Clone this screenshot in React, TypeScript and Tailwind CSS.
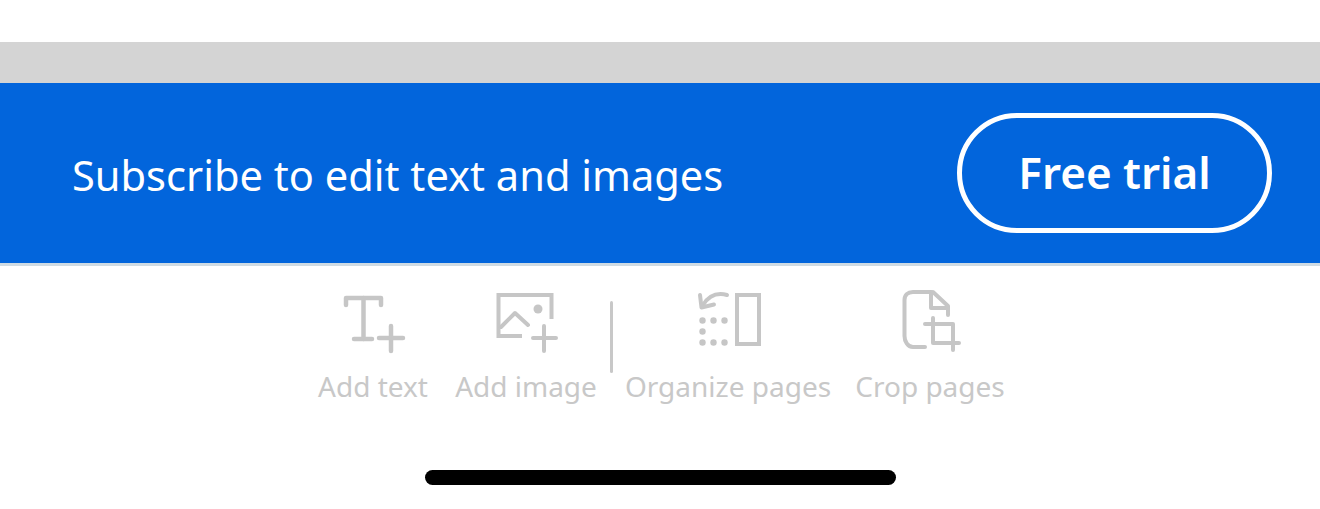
const strokeProps = {
  fill: 'none',
  stroke: '#c6c6c6',
  strokeWidth: 4,
  strokeLinecap: 'round' as const,
  strokeLinejoin: 'round' as const,
};

function AddTextIcon() {
  return (
    <svg width="112" height="68" viewBox="317 288 112 68" {...strokeProps} strokeWidth={4.5}>
      <path d="M346 305V298H381V305" />
      <path d="M363.5 298V339" />
      <path d="M354 339H372" />
      <path d="M379 338H403M391 326V351" />
    </svg>
  );
}

function AddImageIcon() {
  return (
    <svg width="142" height="68" viewBox="455 288 142 68" {...strokeProps}>
      <path d="M551.5 319V295H498.5V336H522" strokeLinecap="butt" strokeLinejoin="miter" />
      <path d="M501 327L515 313L528 325" />
      <circle cx="538" cy="309" r="4.5" fill="#c6c6c6" stroke="none" />
      <path d="M533 338H556M544 326V351" />
    </svg>
  );
}

function OrganizeIcon() {
  const dots = [
    [702.5, 320.5], [713.5, 320.5], [724.5, 320.5],
    [702.5, 331.5],
    [702.5, 342.5], [713.5, 342.5], [724.5, 342.5],
  ];
  return (
    <svg width="204" height="68" viewBox="626 288 204 68" {...strokeProps}>
      <rect x="737" y="295" width="22" height="49" strokeLinejoin="miter" />
      <path d="M727 295C716 292 708 297 703 305" />
      <path d="M700 295L701.5 307.5L714 304.5" />
      {dots.map(([cx, cy]) => (
        <circle key={`${cx}-${cy}`} cx={cx} cy={cy} r="3.2" fill="#c6c6c6" stroke="none" />
      ))}
    </svg>
  );
}

function CropIcon() {
  return (
    <svg width="148" height="68" viewBox="856 288 148 68" {...strokeProps}>
      <path d="M931 292H913C907.5 292 904.5 295 904.5 300V336C904.5 341 907.5 347 913 347H925" />
      <path d="M931 292V308H948V315" />
      <path d="M933 292L948 306V308" />
      <path d="M925 324H953V350" />
      <path d="M933 318V343H959" />
    </svg>
  );
}

function ToolItem({ label, width, children }: { label: string; width: string; children: React.ReactNode }) {
  return (
    <div className={`flex flex-col items-center ${width}`}>
      {children}
      <span className="mt-[11px] whitespace-nowrap text-[28px] leading-[38px] text-[#c8c8c8]">{label}</span>
    </div>
  );
}

export default function App() {
  return (
    <div className="h-[509px] w-[1320px] overflow-hidden bg-white font-['Noto_Sans',sans-serif]">
      <div className="h-[42px]" />
      <div className="h-[41px] bg-[#d4d4d4]" />

      {/* Banner */}
      <div className="flex h-[180px] items-center justify-between bg-[#0265dc] pl-[72px] pr-[48px]">
        <span className="mt-[6px] text-[41.6px] leading-none text-white">Subscribe to edit text and images</span>
        <button className="flex h-[120px] w-[315px] items-center justify-center rounded-[60px] border-[5px] border-white pb-[2px] text-[44px] font-semibold text-white">
          Free trial
        </button>
      </div>
      <div className="h-[3px] bg-[#cfdbe3]" />

      {/* Toolbar */}
      <div className="flex items-start pl-[317px] pt-[22px]">
        <ToolItem label="Add text" width="w-[112px]"><AddTextIcon /></ToolItem>
        <div className="ml-[26px]">
          <ToolItem label="Add image" width="w-[142px]"><AddImageIcon /></ToolItem>
        </div>
        <div className="ml-[13px] mt-[13px] h-[72px] w-[3px] rounded-full bg-[#c8c8c8]" />
        <div className="ml-[13px]">
          <ToolItem label="Organize pages" width="w-[204px]"><OrganizeIcon /></ToolItem>
        </div>
        <div className="ml-[26px]">
          <ToolItem label="Crop pages" width="w-[148px]"><CropIcon /></ToolItem>
        </div>
      </div>

      {/* Home indicator */}
      <div className="ml-[425px] mt-[65px] h-[15px] w-[471px] rounded-full bg-black" />
    </div>
  );
}
